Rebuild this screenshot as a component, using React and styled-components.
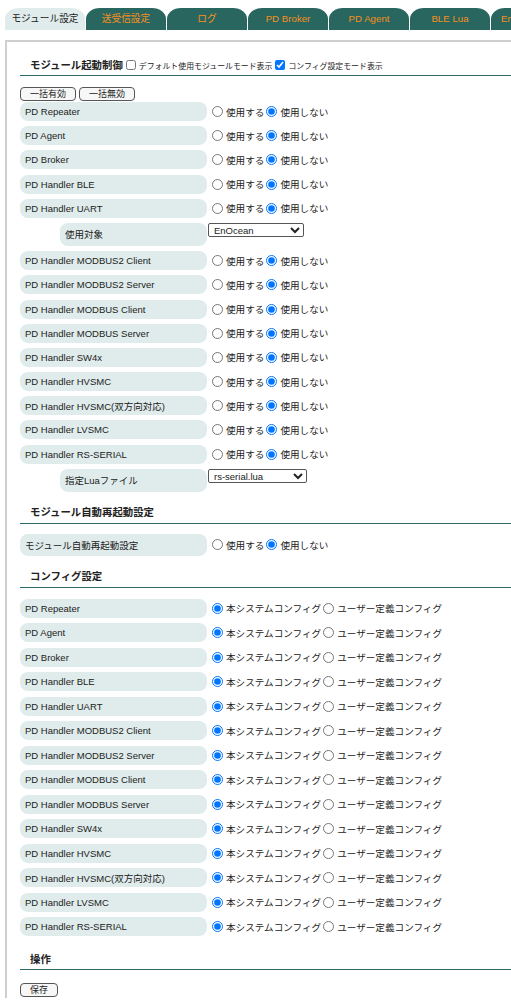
import React from 'react';
import styled, { createGlobalStyle } from 'styled-components';

const colors = {
  teal: '#28665f',
  orange: '#f7901e',
  cell: '#dfeceb',
  rule: '#2f6a66',
  text: '#222222',
  frame: '#cfcfcf',
};

const GlobalStyle = createGlobalStyle`
  html, body {
    margin: 0;
    overflow: hidden;
    background: #fff;
  }
  body {
    font-family: "Liberation Sans", Arial, "Noto Sans CJK JP", sans-serif;
    color: ${colors.text};
  }
`;

const Page = styled.div`
  padding: 8px 0 0 5px;
  width: 620px;
`;

const TabBar = styled.div`
  display: flex;
  gap: 1px;
  height: 22px;
`;

const Tab = styled.div`
  flex: 0 0 80px;
  height: 22px;
  line-height: 21px;
  text-align: center;
  font-size: 9.7px;
  white-space: nowrap;
  border-radius: 14px 14px 0 0 / 11px 11px 0 0;
  background: ${(p) => (p.$active ? colors.cell : colors.teal)};
  color: ${(p) => (p.$active ? colors.text : colors.orange)};
`;

const Panel = styled.div`
  margin-top: 10px;
  border-top: 2px solid ${colors.frame};
  border-left: 2px solid ${colors.frame};
  padding: 10px 0 0 13px;
`;

const Section = styled.section`
  margin-top: ${(p) => p.$mt || 0}px;
`;

const SectionHead = styled.div`
  display: flex;
  align-items: center;
  padding: 4px 0 3px 10px;
  height: 16px;
  border-bottom: 1.5px solid ${colors.rule};
`;

const HeadTitle = styled.span`
  font-size: 10.4px;
  font-weight: bold;
`;

const HeadOption = styled.label`
  display: inline-flex;
  align-items: center;
  font-size: 7.9px;
  margin-top: 2px;

  input {
    width: 10px;
    height: 10px;
    margin: 0 3px 0 3px;
  }
`;

const SectionBody = styled.div`
  padding-top: ${(p) => p.$top || 12}px;
  display: flex;
  flex-direction: column;
`;

const ButtonBar = styled.div`
  display: flex;
  gap: 3px;
  margin-bottom: 1px;
`;

const Button = styled.button`
  box-sizing: border-box;
  font-family: inherit;
  font-size: 9px;
  height: 14px;
  line-height: 12px;
  padding: 0 9px;
  background: #f7f7f7;
  color: ${colors.text};
  border: 1px solid #555;
  border-radius: 4px;
`;

const Rows = styled.div`
  display: flex;
  flex-direction: column;
  gap: ${(p) => p.$gap}px;
`;

const Row = styled.div`
  display: grid;
  grid-template-columns: 187px 1fr;
  align-items: ${(p) => (p.$sub ? 'start' : 'center')};
`;

const Cell = styled.div`
  height: ${(p) => (p.$sub ? 23 : p.$tall ? 22 : 19)}px;
  margin-left: ${(p) => (p.$sub ? 40 : 0)}px;
  padding-left: 5px;
  display: flex;
  align-items: center;
  background: ${colors.cell};
  border-radius: 8px;
  font-size: 9.5px;
  white-space: nowrap;
`;

const Choices = styled.div`
  display: flex;
  align-items: center;
  height: 19px;
  padding-left: 5px;
  font-size: 9.6px;
  white-space: nowrap;
`;

const Choice = styled.label`
  display: inline-flex;
  align-items: center;

  input {
    width: 11px;
    height: 11px;
    margin: 0 3px 0 0;
  }

  & + & input {
    margin-left: 2px;
  }
`;

const Select = styled.select`
  display: block;
  width: ${(p) => p.$w}px;
  height: 14px;
  margin-left: 1px;
  font-family: inherit;
  font-size: 9.5px;
  padding: 0 1px;
  border: 1px solid #555;
  border-radius: 2px;
  background: #fff;
  color: ${colors.text};
`;

const tabs = ['モジュール設定', '送受信設定', 'ログ', 'PD Broker', 'PD Agent', 'BLE Lua', 'EnOcean設定'];

const modules = [
  'PD Repeater',
  'PD Agent',
  'PD Broker',
  'PD Handler BLE',
  'PD Handler UART',
  'PD Handler MODBUS2 Client',
  'PD Handler MODBUS2 Server',
  'PD Handler MODBUS Client',
  'PD Handler MODBUS Server',
  'PD Handler SW4x',
  'PD Handler HVSMC',
  'PD Handler HVSMC(双方向対応)',
  'PD Handler LVSMC',
  'PD Handler RS-SERIAL',
];

// sub settings shown under a module row
const subRows = {
  'PD Handler UART': { label: '使用対象', value: 'EnOcean', width: 96 },
  'PD Handler RS-SERIAL': { label: '指定Luaファイル', value: 'rs-serial.lua', width: 99 },
};

function RadioPair({ name, options, checked }) {
  return (
    <Choices>
      {options.map((opt, i) => (
        <Choice key={opt}>
          <input type='radio' name={name} defaultChecked={i === checked} />
          {opt}
        </Choice>
      ))}
    </Choices>
  );
}

const useOptions = ['使用する', '使用しない'];
const configOptions = ['本システムコンフィグ', 'ユーザー定義コンフィグ'];

function App() {
  return (
    <Page>
      <GlobalStyle />
      <TabBar>
        {tabs.map((t, i) => (
          <Tab key={t} $active={i === 0}>
            {t}
          </Tab>
        ))}
      </TabBar>
      <Panel>
        <Section>
          <SectionHead>
            <HeadTitle>モジュール起動制御</HeadTitle>
            <HeadOption>
              <input type='checkbox' />
              デフォルト使用モジュールモード表示
            </HeadOption>
            <HeadOption>
              <input type='checkbox' defaultChecked />
              コンフィグ設定モード表示
            </HeadOption>
          </SectionHead>
          <SectionBody $top={11}>
            <ButtonBar>
              <Button>一括有効</Button>
              <Button>一括無効</Button>
            </ButtonBar>
            <Rows $gap={5.2}>
              {modules.map((m) => (
                <React.Fragment key={m}>
                  <Row>
                    <Cell>{m}</Cell>
                    <RadioPair name={`use-${m}`} options={useOptions} checked={1} />
                  </Row>
                  {subRows[m] && (
                    <Row $sub>
                      <Cell $sub>{subRows[m].label}</Cell>
                      <div>
                        <Select $w={subRows[m].width} defaultValue={subRows[m].value}>
                          <option>{subRows[m].value}</option>
                        </Select>
                      </div>
                    </Row>
                  )}
                </React.Fragment>
              ))}
            </Rows>
          </SectionBody>
        </Section>

        <Section $mt={8}>
          <SectionHead>
            <HeadTitle>モジュール自動再起動設定</HeadTitle>
          </SectionHead>
          <SectionBody $top={10}>
            <Row>
              <Cell $tall>モジュール自動再起動設定</Cell>
              <RadioPair name='restart' options={useOptions} checked={1} />
            </Row>
          </SectionBody>
        </Section>

        <Section $mt={8}>
          <SectionHead>
            <HeadTitle>コンフィグ設定</HeadTitle>
          </SectionHead>
          <SectionBody $top={11}>
            <Rows $gap={5.5}>
              {modules.map((m) => (
                <Row key={m}>
                  <Cell>{m}</Cell>
                  <RadioPair name={`conf-${m}`} options={configOptions} checked={0} />
                </Row>
              ))}
            </Rows>
          </SectionBody>
        </Section>

        <Section $mt={10}>
          <SectionHead>
            <HeadTitle>操作</HeadTitle>
          </SectionHead>
          <SectionBody $top={13}>
            <ButtonBar>
              <Button>保存</Button>
            </ButtonBar>
          </SectionBody>
        </Section>
      </Panel>
    </Page>
  );
}

export default App;
